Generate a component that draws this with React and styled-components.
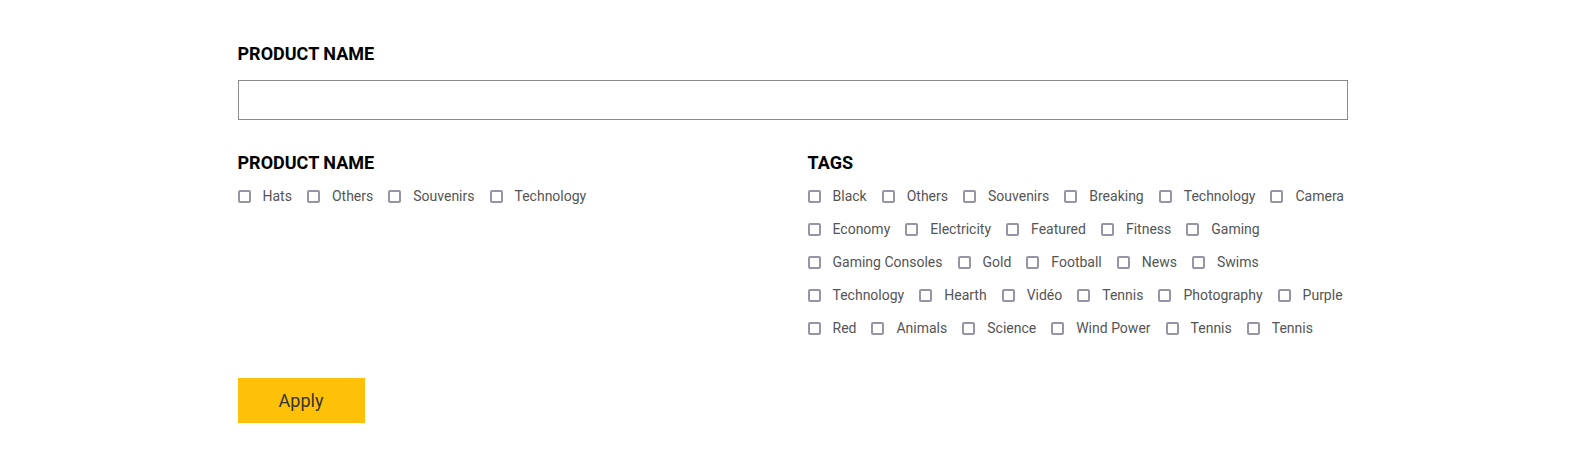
import styled, { createGlobalStyle } from "styled-components";

const GlobalStyle = createGlobalStyle`
  body {
    margin: 0;
    background: #fff;
    font-family: Roboto, "Liberation Sans", sans-serif;
  }
`;

const categories = ["Hats", "Others", "Souvenirs", "Technology"];
const tags = [
  "Black", "Others", "Souvenirs", "Breaking", "Technology", "Camera",
  "Economy", "Electricity", "Featured", "Fitness", "Gaming",
  "Gaming Consoles", "Gold", "Football", "News", "Swims",
  "Technology", "Hearth", "Vidéo", "Tennis", "Photography", "Purple",
  "Red", "Animals", "Science", "Wind Power", "Tennis", "Tennis",
];

function CheckList({ items }) {
  return (
    <List>
      {items.map((item, i) => (
        <Item key={i}>
          <Box type="checkbox" />
          <span>{item}</span>
        </Item>
      ))}
    </List>
  );
}

function App() {
  return (
    <>
      <GlobalStyle />
      <Page>
        <Label>PRODUCT NAME</Label>
        <Input type="text" />
        <Columns>
          <div>
            <Label>PRODUCT NAME</Label>
            <CheckList items={categories} />
          </div>
          <div>
            <Label>TAGS</Label>
            <CheckList items={tags} />
          </div>
        </Columns>
        <Apply>Apply</Apply>
      </Page>
    </>
  );
}

const Page = styled.div`
  width: 1110px;
  margin: 0 auto;
  padding: 43px 0 48px 2px;
`;
const Label = styled.h3`
  margin: 0;
  font-size: 18px;
  line-height: 22px;
  font-weight: 700;
  color: #000;
`;
const Input = styled.input`
  display: block;
  box-sizing: border-box;
  width: 100%;
  height: 40px;
  margin: 15px 0 32px;
  border: 1px solid #8a8a8a;
  outline: none;
`;
const Columns = styled.div`
  display: grid;
  grid-template-columns: 570px 540px;
`;
const List = styled.div`
  display: flex;
  flex-wrap: wrap;
  column-gap: 15px;
  margin-top: 5px;
`;
const Item = styled.label`
  display: flex;
  align-items: center;
  height: 33px;
  font-size: 14px;
  color: #555;
`;
const Box = styled.input`
  appearance: none;
  box-sizing: border-box;
  width: 13px;
  height: 13px;
  margin: 1px 12px 0 0;
  border: 2px solid #9795a5;
  border-radius: 2px;
  background: #fff;
`;
const Apply = styled.button`
  display: block;
  width: 127px;
  height: 45px;
  margin-top: 34px;
  border: none;
  background: #ffc107;
  font-family: Roboto, "Liberation Sans", sans-serif;
  font-size: 18px;
  color: #333;
`;

export default App;
